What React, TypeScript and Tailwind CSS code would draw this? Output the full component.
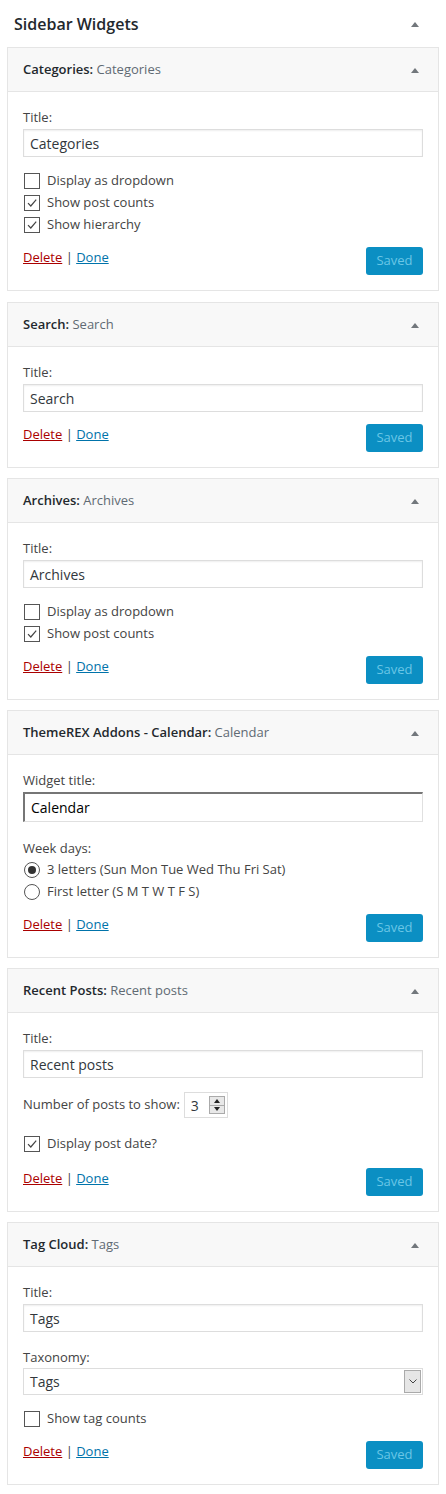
const font = { fontFamily: '"Open Sans", "Liberation Sans", sans-serif' };

function Arrow() {
  return (
    <svg width="10" height="6" viewBox="0 0 10 6" className="shrink-0">
      <path d="M1 6 L5 1 L9 6 Z" fill="#72777c" />
    </svg>
  );
}

function Checkbox({ checked }: { checked?: boolean }) {
  return (
    <span className="w-4 h-4 border border-[#555] bg-white flex items-center justify-center shrink-0">
      {checked && (
        <svg width="12" height="12" viewBox="0 0 12 12">
          <path d="M2 6.2 L4.8 9 L10.2 2.6" fill="none" stroke="#444" strokeWidth="1.2" />
        </svg>
      )}
    </span>
  );
}

function Radio({ checked }: { checked?: boolean }) {
  return (
    <span className="w-4 h-4 rounded-full border border-[#555] bg-white flex items-center justify-center shrink-0">
      {checked && <span className="w-2 h-2 rounded-full bg-[#333]" />}
    </span>
  );
}

function Row({ children }: { children: React.ReactNode }) {
  return <div className="h-[22px] flex items-center gap-[7px] pl-[1px]">{children}</div>;
}

function Field({ label, value }: { label: string; value: string }) {
  return (
    <div>
      <div className="leading-5 text-[#444]">{label}</div>
      <div className="mt-[2px] h-[28px] border border-[#ddd] shadow-[inset_0_1px_2px_rgba(0,0,0,0.07)] bg-white flex items-center px-[6px] text-[14px] text-[#32373c]">
        {value}
      </div>
    </div>
  );
}

function Footer({ mt }: { mt: string }) {
  return (
    <div className={`flex justify-between items-start ${mt}`}>
      <div className="leading-5 text-[#444]">
        <span className="text-[#a00] underline">Delete</span> | <span className="text-[#0073aa] underline">Done</span>
      </div>
      <div className="h-[28px] w-[57px] rounded-[3px] bg-[#0b8fc3] text-[#6ac6e6] text-[13px] flex items-center justify-center">
        Saved
      </div>
    </div>
  );
}

function Widget({ name, title, mb = 'mb-[10px]', children }: { name: string; title: string; mb?: string; children: React.ReactNode }) {
  return (
    <div className={`border border-[#e5e5e5] bg-white ${mb}`}>
      <div className="h-[44px] bg-[#f8f8f8] border-b border-[#e5e5e5] flex items-center justify-between pl-[15px] pr-[18px]">
        <div className="text-[13px]">
          <span className="font-semibold text-[#23282d]">{name}:</span>{' '}
          <span className="text-[#606a73]">{title}</span>
        </div>
        <Arrow />
      </div>
      <div className="px-[15px] pt-[15px] pb-[15px] text-[13px]">{children}</div>
    </div>
  );
}

export default function App() {
  return (
    <div className="w-[446px] bg-white pl-[7px] pr-[7px] pb-[11px]" style={font}>
      <div className="h-[47px] flex items-center justify-between pl-[7px] pr-[19px]">
        <h2 className="text-[16px] font-semibold text-[#23282d]">Sidebar Widgets</h2>
        <Arrow />
      </div>

      <Widget name="Categories" title="Categories" mb="mb-[11px]">
        <Field label="Title:" value="Categories" />
        <div className="mt-[13px] text-[#444]">
          <Row><Checkbox /> Display as dropdown</Row>
          <Row><Checkbox checked /> Show post counts</Row>
          <Row><Checkbox checked /> Show hierarchy</Row>
        </div>
        <Footer mt="mt-[11px]" />
      </Widget>

      <Widget name="Search" title="Search">
        <Field label="Title:" value="Search" />
        <Footer mt="mt-[12px]" />
      </Widget>

      <Widget name="Archives" title="Archives">
        <Field label="Title:" value="Archives" />
        <div className="mt-[13px] text-[#444]">
          <Row><Checkbox /> Display as dropdown</Row>
          <Row><Checkbox checked /> Show post counts</Row>
        </div>
        <Footer mt="mt-[11px]" />
      </Widget>

      <Widget name="ThemeREX Addons - Calendar" title="Calendar">
        <div className="leading-5 text-[#444]">Widget title:</div>
        <div className="mt-[2px] h-[30px] border-t-2 border-l-2 border-r border-b border-t-[#767676] border-l-[#767676] border-r-[#e0e0e0] border-b-[#e0e0e0] bg-white flex items-center px-[6px] text-[14px] text-black">
          Calendar
        </div>
        <div className="mt-[16px] leading-5 text-[#444]">Week days:</div>
        <div className="mt-[1px] text-[#444]">
          <Row><Radio checked /> 3 letters (Sun Mon Tue Wed Thu Fri Sat)</Row>
          <Row><Radio /> First letter (S M T W T F S)</Row>
        </div>
        <Footer mt="mt-[11px]" />
      </Widget>

      <Widget name="Recent Posts" title="Recent posts">
        <Field label="Title:" value="Recent posts" />
        <div className="mt-[14px] flex items-center gap-[4px] text-[#444]">
          <span>Number of posts to show:</span>
          <div className="h-[26px] w-[44px] border border-[#ddd] bg-white flex items-center justify-between pl-[6px] pr-[2px]">
            <span className="text-[14px] text-[#32373c]">3</span>
            <div className="w-[16px] h-[18px] flex flex-col border border-[#aaa] bg-[#e8e8e8]">
              <div className="flex-1 flex items-center justify-center border-b border-[#aaa]">
                <svg width="6" height="4" viewBox="0 0 6 4"><path d="M0 4 L3 0 L6 4 Z" fill="#222" /></svg>
              </div>
              <div className="flex-1 flex items-center justify-center">
                <svg width="6" height="4" viewBox="0 0 6 4"><path d="M0 0 L3 4 L6 0 Z" fill="#222" /></svg>
              </div>
            </div>
          </div>
        </div>
        <div className="mt-[15px] text-[#444]">
          <Row><Checkbox checked /> Display post date?</Row>
        </div>
        <Footer mt="mt-[13px]" />
      </Widget>

      <Widget name="Tag Cloud" title="Tags">
        <Field label="Title:" value="Tags" />
        <div className="mt-[15px] leading-5 text-[#444]">Taxonomy:</div>
        <div className="mt-[1px] h-[27px] border border-[#ddd] bg-white flex items-center justify-between pl-[6px] pr-[1px] text-[14px] text-[#32373c]">
          <span>Tags</span>
          <div className="w-[17px] h-[23px] bg-[#e6e6e6] border border-[#aaa] flex items-center justify-center">
            <svg width="8" height="5" viewBox="0 0 8 5"><path d="M0.5 0.5 L4 4 L7.5 0.5" fill="none" stroke="#444" strokeWidth="1" /></svg>
          </div>
        </div>
        <div className="mt-[13px] text-[#444]">
          <Row><Checkbox /> Show tag counts</Row>
        </div>
        <Footer mt="mt-[11px]" />
      </Widget>
    </div>
  );
}
